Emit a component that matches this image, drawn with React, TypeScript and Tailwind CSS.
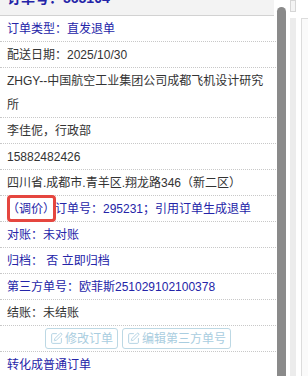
import { SquarePen } from 'lucide-react'

const BLUE = 'text-[#2424a8]'
const GRAY = 'text-[#333333]'

function Row({ children, blue, className = '' }: { children: React.ReactNode; blue?: boolean; className?: string }) {
  return (
    <div className={`px-[7px] pt-[1px] leading-[24px] border-b border-dotted border-[#c8c8c8] ${blue ? BLUE : GRAY} ${className}`}>
      {children}
    </div>
  )
}

function Btn({ label }: { label: string }) {
  return (
    <button className="flex items-center gap-[2px] h-[21px] px-[4px] border border-[#bcd8e4] rounded-[3px] text-[#a9cde0] text-[12px] leading-none bg-white">
      <SquarePen size={13} strokeWidth={1.6} className="text-[#a9cde0]" />
      {label}
    </button>
  )
}

export default function App() {
  return (
    <div className="w-[308px] h-[376px] overflow-hidden bg-white flex text-[12px]" style={{ fontFamily: '"Liberation Sans", "Noto Sans CJK SC", sans-serif' }}>
      {/* order panel */}
      <div className="w-[276px] shrink-0 relative">
        <div className="-mt-[15px] h-[31px] w-[274px] bg-[#f3f3f3] border-b border-[#d2d2d2] px-[7px] pt-[5px] text-[14px] font-bold text-[#2424a8] leading-[16px]">
          订单号：565104
        </div>
        <Row blue>订单类型：直发退单</Row>
        <Row>配送日期：2025/10/30</Row>
        <Row>ZHGY--中国航空工业集团公司成都飞机设计研究所</Row>
        <Row>李佳伲，行政部</Row>
        <Row>15882482426</Row>
        <Row>四川省.成都市.青羊区.翔龙路346（新二区）</Row>
        <Row blue className="relative">
          （调价）订单号：295231；引用订单生成退单
          <div className="absolute left-[7px] top-[-1px] w-[49px] h-[27px] border-[3px] border-[#e5463f] rounded-[4px]" />
        </Row>
        <Row blue>对账：未对账</Row>
        <Row blue>归档：&nbsp;否 立即归档</Row>
        <Row blue>第三方单号：欧菲斯251029102100378</Row>
        <Row>结账：未结账</Row>
        <div className="h-[26px] flex items-center justify-center gap-[4px] border-b border-dotted border-[#c8c8c8]">
          <Btn label="修改订单" />
          <Btn label="编辑第三方单号" />
        </div>
        <Row blue className="border-b-0">转化成普通订单</Row>
      </div>

      {/* scrollbar */}
      <div className="w-[11px] shrink-0 bg-white pl-[1px]">
        <div className="w-[9px] h-full mt-[7px] bg-[#8a8a8a] rounded-t-[5px]" />
      </div>

      {/* right strip */}
      <div className="flex-1 flex bg-white">
        <div className="w-[3px]" />
        <div className="w-[6px] flex flex-col">
          <div className="h-[12px] border border-[#d6d6d6] bg-[#f4f4f4]" />
          <div className="flex-1 mt-[6px] bg-[#ececec]" />
        </div>
        <div className="flex-1 flex flex-col">
          <div className="h-[18px]" />
          <div className="flex-1 ml-[5px] border-l border-t border-[#dcdcdc] bg-[#fafafa]" />
        </div>
      </div>
    </div>
  )
}
